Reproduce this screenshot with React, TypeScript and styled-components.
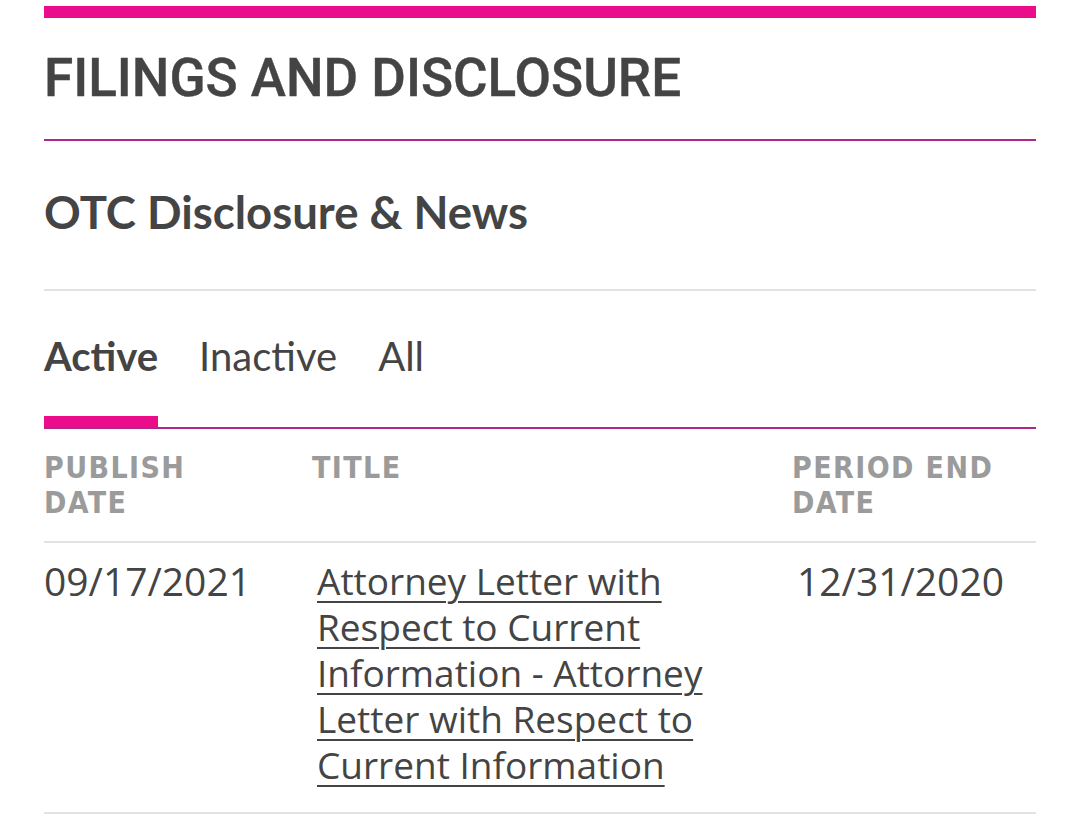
import React from "react";
import styled, { createGlobalStyle } from "styled-components";

const Global = createGlobalStyle`
  html, body { margin: 0; padding: 0; background: #fff; }
  body { font-family: Lato, "Open Sans", sans-serif; color: #444; }
`;

const Page = styled.div`
  padding: 6px 44px 0 44px;
  width: 992px;
`;

const TopBar = styled.div`
  height: 12px;
  background: #ea0c8a;
`;

const PageTitle = styled.h1`
  margin: 0;
  padding-top: 30px;
  height: 123px;
  box-sizing: border-box;
  font-family: Roboto, "DejaVu Sans", sans-serif;
  font-weight: 500;
  font-size: 53px;
  line-height: 60px;
  color: #444;
  -webkit-text-stroke: 0.4px #444;
  border-bottom: 2px solid #b0278c;
`;

const SectionTitle = styled.h2`
  margin: 0;
  height: 150px;
  box-sizing: border-box;
  padding-top: 45px;
  font-family: Lato, sans-serif;
  font-weight: 700;
  font-size: 45.5px;
  line-height: 52px;
  color: #444;
  border-bottom: 2px solid #e2e2e2;
`;

const Tabs = styled.div`
  display: flex;
  gap: 41px;
  border-bottom: 2px solid #b0278c;
  padding-top: 40px;
`;

const Tab = styled.div<{ $active?: boolean }>`
  font-family: Lato, sans-serif;
  font-size: 40px;
  line-height: 50px;
  font-weight: ${(p) => (p.$active ? 700 : 400)};
  color: #444;
  padding-bottom: 46px;
  position: relative;
  &::after {
    content: "";
    display: ${(p) => (p.$active ? "block" : "none")};
    position: absolute;
    left: 0;
    right: 0;
    bottom: 0;
    height: 11px;
    background: #ea0c8a;
  }
`;

const Row = styled.div<{ $head?: boolean }>`
  display: grid;
  grid-template-columns: 268px 480px 1fr;
  border-bottom: 2px solid #e2e2e2;
  padding: ${(p) => (p.$head ? "21px 0 21px" : "15px 0 24px")};
`;

const HeadCell = styled.div`
  font-family: "DejaVu Sans Condensed", "DejaVu Sans", sans-serif;
  font-weight: 700;
  font-size: 30px;
  line-height: 35px;
  letter-spacing: 1.4px;
  color: #9b9b9b;
  text-transform: uppercase;
`;

const Cell = styled.div<{ $indent?: number }>`
  font-family: "Open Sans", sans-serif;
  font-size: 39px;
  line-height: 46px;
  color: #444;
  padding-left: ${(p) => p.$indent ?? 0}px;
`;

const TitleLink = styled.a`
  display: block;
  padding-left: 5px;
  padding-right: 45px;
  font-family: "Open Sans", sans-serif;
  font-size: 37px;
  line-height: 46px;
  color: #444;
  text-decoration: underline;
  text-decoration-thickness: 2px;
  text-underline-offset: 6px;
`;

export default function App() {
  return (
    <>
      <Global />
      <Page>
        <TopBar />
        <PageTitle>FILINGS AND DISCLOSURE</PageTitle>
        <SectionTitle>OTC Disclosure &amp; News</SectionTitle>
        <Tabs>
          <Tab $active>Active</Tab>
          <Tab>Inactive</Tab>
          <Tab>All</Tab>
        </Tabs>
        <Row $head>
          <HeadCell>Publish<br />Date</HeadCell>
          <HeadCell>Title</HeadCell>
          <HeadCell>Period End<br />Date</HeadCell>
        </Row>
        <Row>
          <Cell>09/17/2021</Cell>
          <div>
            <TitleLink href="#">
              Attorney Letter with Respect to Current Information - Attorney Letter with Respect to Current Information
            </TitleLink>
          </div>
          <Cell $indent={5}>12/31/2020</Cell>
        </Row>
      </Page>
    </>
  );
}
